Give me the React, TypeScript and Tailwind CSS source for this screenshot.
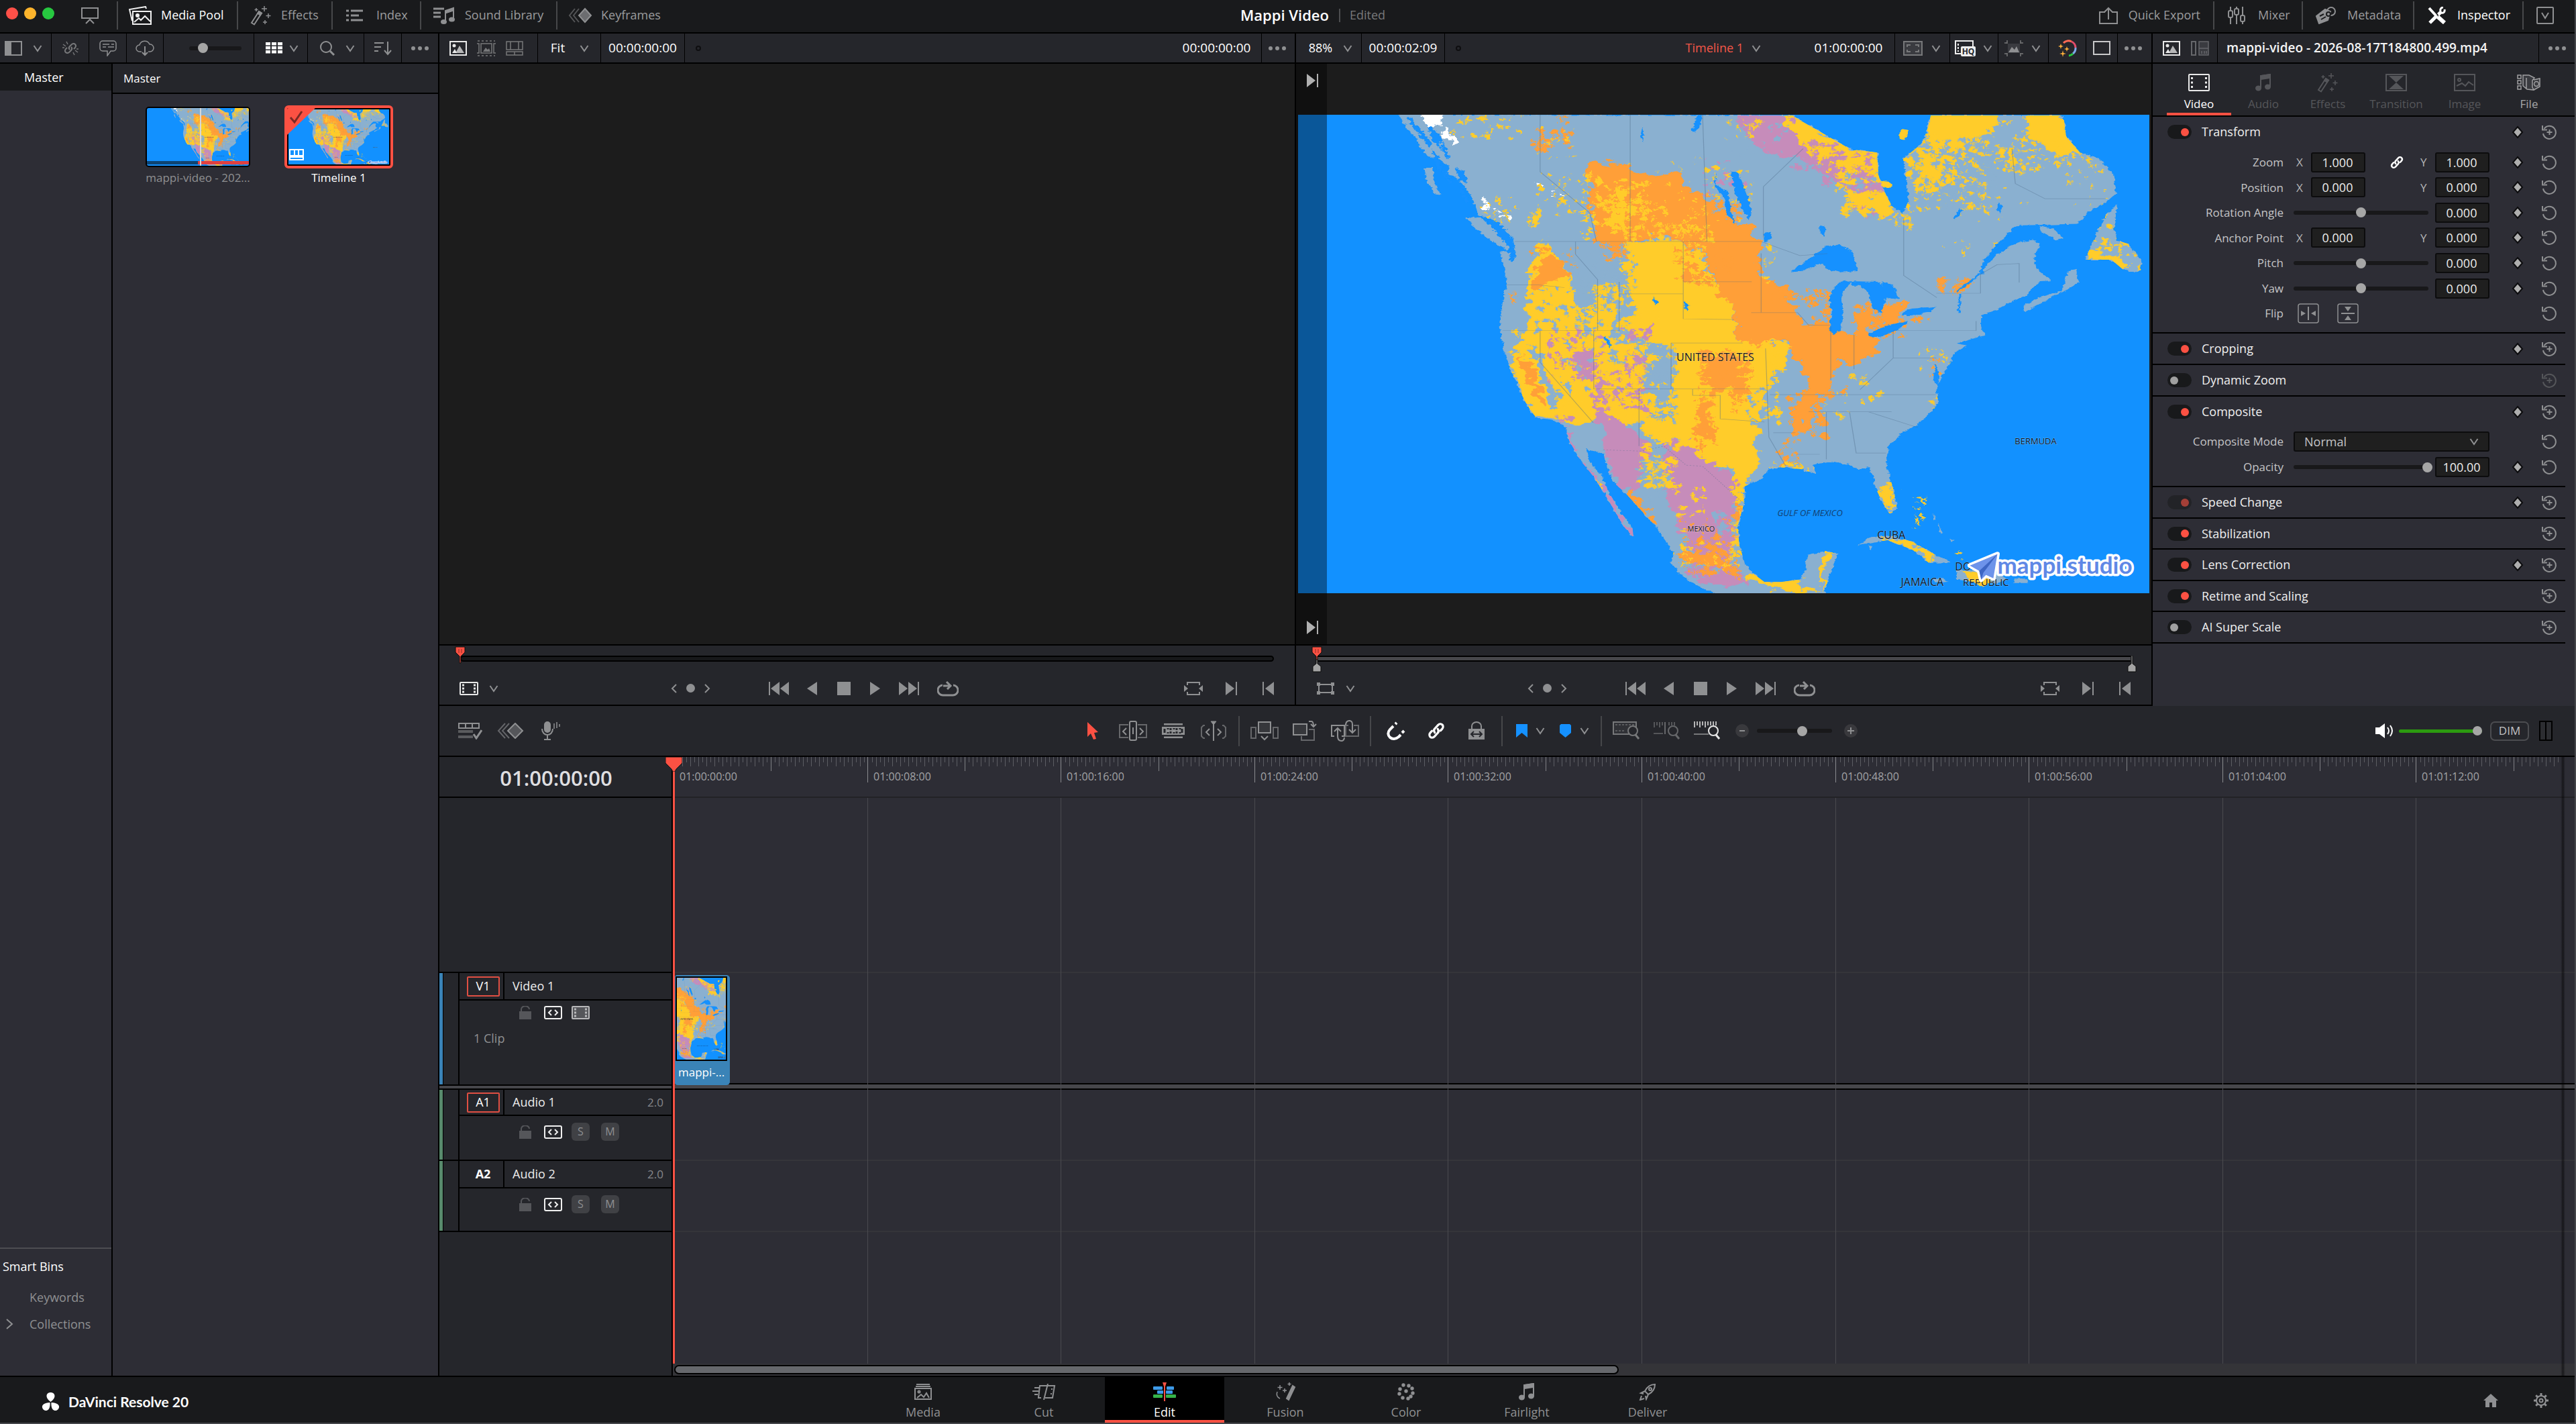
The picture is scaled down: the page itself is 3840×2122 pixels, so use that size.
import React from "react";

type Kids = { children?: React.ReactNode };

/* ---------- icon helper: every icon is drawn on its own pixel grid ---------- */
function Ico({ w, h, c = "#8f9092", s = 2, children, cls = "" }: Kids & { w: number; h: number; c?: string; s?: number; cls?: string }) {
  return (
    <svg width={w} height={h} viewBox={`0 0 ${w} ${h}`} fill="none" stroke={c} strokeWidth={s} color={c} className={`shrink-0 ${cls}`} aria-hidden="true">
      {children}
    </svg>
  );
}

const Chev = ({ c = "#8f9092" }: { c?: string }) => (
  <Ico w={14} h={12} c={c}><path d="M1.5 2l5.5 8 5.5-8" /></Ico>
);
const Dots = () => (
  <Ico w={28} h={8}><g fill="#8f9092" stroke="none"><circle cx="4" cy="4" r="3" /><circle cx="14" cy="4" r="3" /><circle cx="24" cy="4" r="3" /></g></Ico>
);
const Picture = ({ c = "#e8e8e8" }: { c?: string }) => (
  <Ico w={26} h={22} c={c}><rect x="1" y="1" width="24" height="20" /><circle cx="7" cy="7" r="2.5" fill={c} stroke="none" /><path d="M9 18l6-11 7 11z" fill={c} stroke="none" opacity=".75" /><path d="M4 18l4-6 3 6z" fill={c} stroke="none" /></Ico>
);
const Film = ({ c = "#e8e8e8", w = 28, h = 20, fill = "none" }: { c?: string; w?: number; h?: number; fill?: string }) => (
  <Ico w={w} h={h} c={c}>
    <rect x="1" y="1" width={w - 2} height={h - 2} rx="1" fill={fill} />
    {[0.25, 0.5, 0.75].map((f) => (
      <g key={f} fill={c} stroke="none"><rect x="4" y={h * f - 1.5} width="3" height="3" /><rect x={w - 7} y={h * f - 1.5} width="3" height="3" /></g>
    ))}
  </Ico>
);
const Wand = ({ c = "#8f9092" }: { c?: string }) => (
  <Ico w={32} h={30} c={c} s={2}>
    <path d="M2 26L13 9l4 2.500L6 28.500z" /><path d="M13 9l4 2.500-2 3-4-2.500z" fill={c} />
    <path d="M21 1v8M17 5h8M9 4v5M6.500 6.500h5M27 12v7M23.500 15.500h7M22 22v6M19 25h6" strokeWidth="1.500" />
  </Ico>
);
const Note = ({ c = "#8f9092" }: { c?: string }) => (
  <Ico w={24} h={26} c={c} s={2}>
    <path d="M8 21V3l14-2v18" /><path d="M8 8V3l14-2v5z" fill={c} />
    <ellipse cx="4.500" cy="21.500" rx="3.500" ry="3" fill={c} /><ellipse cx="18.500" cy="19.500" rx="3.500" ry="3" fill={c} />
  </Ico>
);
const Diamond = () => (
  <Ico w={20} h={20} c="#0c0c0e" s={2}><path d="M10 2l7 8-7 8-7-8z" fill="#aeaeae" /></Ico>
);
const Reset = ({ plus, dim }: { plus?: boolean; dim?: boolean }) => (
  <button aria-label="Reset" className="flex shrink-0">
    <Ico w={24} h={24} c={dim ? "#55565a" : "#8f9092"} s={2}>
      <path d="M4.500 7A9.500 9.500 0 1 1 3 14" /><path d="M2 2v6.500h7" />
      {plus && <path d="M12.500 8v8M8.500 12h8" />}
    </Ico>
  </button>
);
const LinkGlyph = ({ c = "#fff", size = 22 }: { c?: string; size?: number }) => (
  <svg width={size} height={size} viewBox="0 0 24 24" fill="none" stroke={c} strokeWidth="3" strokeLinecap="round" aria-hidden="true" className="shrink-0">
    <path d="M10 14.500c-2-2.500-1-4.500 0-5.500l4.500-5c2-2 4.500-1.500 5.800-.3 1.400 1.400 1.500 3.800-.3 5.800l-2 2.200" />
    <path d="M14 9.500c2 2.500 1 4.500 0 5.500l-4.500 5c-2 2-4.500 1.500-5.800.3-1.400-1.400-1.500-3.800.3-5.800l2-2.200" />
  </svg>
);

/* ---------- land-cover map ---------- */
const WATER = "#1291ff", LAND = "#8ab0d0", YEL = "#ffcc2c", ORA = "#ff9f38", PUR = "#c68cba";

type Spot = [number, number, number, number, number, string, number];
const SPOTS: Spot[] = [
  [430, 440, 520, 560, 30, ORA, 7], [432, 560, 580, 700, 60, LAND, 7], [500, 420, 600, 700, 90, LAND, 8], [520, 200, 545, 420, 24, YEL, 8],
  [540, 430, 620, 620, 70, LAND, 9], [590, 560, 660, 760, 50, YEL, 9], [640, 740, 690, 1000, 60, LAND, 11], [600, 740, 690, 1000, 70, YEL, 9],
  [460, 700, 560, 860, 60, PUR, 9], [540, 840, 640, 960, 50, PUR, 10], [600, 770, 640, 850, 22, PUR, 10], [560, 700, 640, 900, 50, YEL, 9],
  [450, 760, 620, 1000, 60, YEL, 9], [480, 700, 640, 900, 40, LAND, 8], [690, 420, 800, 560, 60, ORA, 9], [600, 370, 760, 440, 80, YEL, 8],
  [550, 230, 640, 400, 70, YEL, 10], [565, 260, 610, 400, 24, ORA, 8], [620, 260, 760, 420, 50, YEL, 6], [700, 500, 740, 550, 8, ORA, 12], [730, 760, 830, 900, 90, ORA, 11],
  [725, 900, 765, 1080, 50, ORA, 9], [790, 880, 820, 960, 20, ORA, 9], [800, 740, 880, 1000, 80, YEL, 10], [840, 740, 890, 830, 40, YEL, 12],
  [820, 880, 870, 1000, 30, LAND, 9], [630, 1000, 700, 1200, 60, YEL, 10], [640, 1030, 680, 1080, 10, LAND, 9], [690, 1200, 745, 1290, 16, YEL, 9],
  [700, 1290, 800, 1450, 60, ORA, 8], [700, 1330, 800, 1460, 30, YEL, 7], [710, 1440, 820, 1500, 34, PUR, 9], [700, 1400, 800, 1470, 40, ORA, 8],
  [790, 1180, 815, 1420, 50, YEL, 8], [760, 1260, 800, 1340, 14, LAND, 10], [620, 1150, 680, 1240, 30, LAND, 10], [620, 1100, 680, 1210, 26, YEL, 7],
  [280, 23, 420, 100, 30, YEL, 7], [430, 70, 500, 140, 34, ORA, 9], [430, 60, 510, 160, 16, YEL, 6], [430, 210, 520, 340, 34, YEL, 6],
  [340, 280, 400, 360, 20, YEL, 7], [420, 330, 445, 380, 8, YEL, 8], [600, 150, 750, 260, 12, YEL, 5], [470, 23, 495, 60, 8, ORA, 6],
  [720, 190, 830, 360, 44, YEL, 7], [740, 160, 820, 280, 22, PUR, 7], [750, 290, 810, 380, 40, ORA, 9], [780, 30, 850, 110, 26, YEL, 7],
  [790, 40, 900, 160, 40, LAND, 6], [900, 100, 980, 200, 30, PUR, 9], [930, 60, 1060, 200, 60, YEL, 8], [960, 140, 1050, 260, 60, PUR, 9],
  [980, 180, 1070, 340, 60, YEL, 9], [1000, 200, 1060, 330, 24, LAND, 7], [1010, 300, 1110, 360, 20, YEL, 7], [1010, 310, 1070, 350, 10, PUR, 6],
  [1120, 80, 1260, 330, 190, YEL, 8], [1120, 100, 1270, 320, 190, LAND, 8], [1260, 30, 1330, 200, 44, YEL, 7], [1330, 100, 1460, 190, 50, YEL, 7],
  [1290, 150, 1360, 210, 14, YEL, 7], [1400, 90, 1490, 330, 34, YEL, 5], [1200, 200, 1330, 460, 14, YEL, 5], [1440, 370, 1535, 510, 34, YEL, 8],
  [1450, 320, 1480, 430, 12, YEL, 8], [1080, 310, 1115, 370, 16, YEL, 6], [850, 430, 870, 560, 10, YEL, 6], [850, 570, 940, 620, 20, ORA, 8],
  [930, 570, 972, 700, 36, ORA, 9], [1010, 620, 1110, 720, 70, ORA, 10], [1110, 660, 1150, 680, 8, ORA, 6], [1165, 540, 1220, 590, 26, ORA, 8],
  [1130, 760, 1190, 850, 14, YEL, 5], [1150, 790, 1170, 850, 8, ORA, 6], [1000, 840, 1040, 880, 14, YEL, 8], [960, 880, 1000, 910, 14, ORA, 7],
  [1030, 900, 1060, 930, 5, YEL, 7], [960, 900, 1010, 990, 8, YEL, 6], [895, 900, 960, 1040, 60, ORA, 9], [880, 1040, 915, 1130, 24, ORA, 7],
  [860, 1120, 945, 1150, 26, YEL, 8], [1055, 1185, 1090, 1270, 34, YEL, 9], [1050, 1350, 1165, 1430, 30, YEL, 8], [1135, 420, 1240, 450, 4, YEL, 6],
  [390, 690, 440, 780, 12, YEL, 7], [390, 580, 402, 620, 8, ORA, 7], [465, 970, 500, 1010, 12, PUR, 8], [535, 1180, 560, 1230, 14, YEL, 7],
  [680, 1380, 720, 1450, 14, YEL, 5], [1150, 880, 1165, 960, 6, YEL, 6], [1120, 1225, 1145, 1330, 9, YEL, 5], [1195, 1400, 1210, 1430, 2, YEL, 6],
];

function blobs([x0, y0, x1, y1, n, , size]: Spot, seed: number) {
  let s = seed * 7919 + 17;
  const r = () => ((s = (s * 16807) % 2147483647) / 2147483647);
  let d = "";
  for (let i = 0; i < n; i++) {
    const x = x0 + r() * (x1 - x0), y = y0 + r() * (y1 - y0);
    const big = r() > 0.75 ? 2 : 1.1;
    const a = big * size * (0.3 + r() * 0.6), b = big * size * 1.5 * (0.4 + r() * 0.9);
    d += `M${(x - a / 2).toFixed(1)} ${y.toFixed(1)}l${(a * r()).toFixed(1)} ${(-b / 2).toFixed(1)}l${(a * 0.7).toFixed(1)} ${(b * r()).toFixed(1)}l${(-a * r()).toFixed(1)} ${(b / 2).toFixed(1)}z`;
  }
  return d;
}
const SPOT_PATHS = SPOTS.map((s, i) => ({ d: blobs(s, i + 3), c: s[5] }));

const COAST =
  "M190 23l14 40 18 34 18 56 22 8 20 24-5 30 18 4 8 22 12 20 12 40 8 40 18 10 22 44 22 52 4 8-28-2 8 50 4 60-8 60-4 70 8 80 16 70 12 50 14 48 16 38 30 6 22 22 8 46 20 60 26 56 18 50 18 54 18 52 16 32-2-30-24-58-18-54-16-60-20-40-6-38 32 16 6 40 10 46 26 42 24 46 26 50 24 60 10 26-5 34 20 40 30 32 40 33h192l-2-25 12-60 12-50-24-8-32 12-4 46-10 32-34 8h-30l-20-26-16-34-10-62-2-60 12-70v-50l30-24 14-30 20-6 40 6 26 16-6-30 34-10 30 8 16 16 20-6 10 26 2 34 12 46 15 43 13-18-5-50-8-50-7-50 5-50 22-36 25-24 27-40 16-30-4-50 10-42 16-38 5-30 24-26-18-6 52-26-8-22v-40l30-20 28-26 26-18 10-26 14-18 20-2-22-28-10-28 4-32 6-28-12-12-30 8-26 28-20 28-20 40 6-40 30-60 30-50 50-2 60-3 20-35 30-30 20-30-5-60-25-50-35-20-25-50-5-67h-240l-5 37-10 50-35 50 5 60 5 70-10 45-20-25-15-50-10-50-2-70-48-10-50-50-45-45-10-12z";

/* x centre, baseline, size, half width, text */
const PLACES: [number, number, number, number, string][] = [
  [622, 367, 16, 60, "UNITED STATES"], [601, 620, 11, 22, "MEXICO"], [884, 631, 16, 22, "CUBA"], [930, 701, 16, 34, "JAMAICA"],
  [991, 678, 16, 14, "DO"], [1025, 701, 15, 36, "REPUBLIC"], [1099, 490, 13, 32, "BERMUDA"],
];

function LandMap({ x = 0, w = 1269, cls, title }: { x?: number; w?: number; cls: string; title: string }) {
  const id = React.useId().replace(/[^a-zA-Z0-9]/g, "");
  const fits = (c: number, half: number) => c - half > x && c + half < x + w;
  return (
    <svg viewBox={`${x} 0 ${w} 713`} preserveAspectRatio="xMidYMid slice" className={cls} role="img" aria-label={title}>
      <defs>
        <filter id={`r${id}`} x="-2%" y="-2%" width="104%" height="104%">
          <feTurbulence type="fractalNoise" baseFrequency="0.04" numOctaves="5" seed="4" />
          <feDisplacementMap in="SourceGraphic" scale="46" xChannelSelector="R" yChannelSelector="G" />
        </filter>
        <filter id={`s${id}`} x="-2%" y="-2%" width="104%" height="104%">
          <feTurbulence type="fractalNoise" baseFrequency="0.12" numOctaves="3" seed="21" />
          <feDisplacementMap in="SourceGraphic" scale="15" xChannelSelector="R" yChannelSelector="G" />
        </filter>
        <filter id={`c${id}`} x="-2%" y="-2%" width="104%" height="104%">
          <feTurbulence type="fractalNoise" baseFrequency="0.09" numOctaves="3" seed="9" />
          <feDisplacementMap in="SourceGraphic" scale="10" xChannelSelector="R" yChannelSelector="G" />
        </filter>
        <clipPath id={`l${id}`}>
          <path d={COAST} />
          <path d="M1490 305l-20 35-15 50-10 40-13 50h48l20 30 30 10 5-40-25-50-20-10-5-40z" />
          <path d="M1020 1383l25-28 35-5 40 20 40 40 30 25-40 2-30-42-45-30-40 10z" />
          <path d="M1100 1200h60v140h-60zM1190 1395h30v50h-30z" />
        </clipPath>
      </defs>
      <rect x="-400" width="2000" height="713" fill={WATER} />
      <g transform="scale(.8227 .4719) translate(-7 -23)">
        <g filter={`url(#c${id})`} fill={LAND}>
          <path d={COAST} />
          <path d="M1490 305l-20 35-15 50-10 40-13 50h48l20 30 30 10 5-40-25-50-20-10-5-40zM1320 625l30-26 40-20 10-60 16-10 4 40-20 26-30 26-26 24-20 20zM1350 375l26 8 16 30-14 4-24-24zM312 345l28 5 35 50 16 44-6 6-36-40-20-30zM235 190h16l4 50 10 36-10-4-14-40zM1020 1383l25-28 35-5 40 20 40 40 30 25-40 2-30-42-45-30-40 10zM1155 1488l20-2 10 8-24 4zM1303 1486h26v14h-24zM1200 1460l60 2 30 26-20 14-40-8-30-4z" />
        </g>
        <g filter={`url(#s${id})`} fill={WATER}>
          <path d="M215 60l10-4 26 60-6 10zM240 40l10 60 20 40-4-50zM250 130l12 30 10 50-14-20zM292 190l8 40 14 10-6-40zM340 340l30 20 28 60 4 50-10 20-2-50-30-60zM206 30l8 0 10 40-6 0zM262 110l8 0 14 50-8 0zM270 200l6 0 12 40-8 0zM300 250l6 0 12 50-8 0z" />
        </g>
        <g clipPath={`url(#l${id})`}>
          <g filter={`url(#r${id})`}>
            <path fill={YEL} d="M556 430l54 0 30-10 60 0 45 60 20 80 30 60 5 120 70-5 20 45-10 50-20 50-10 60-15 60 15 10-15 50 5 80-25 50-5 70-10 0-5-120-30-10-25-20-30-50-10-10-40 10-30-50 10-50 50-40V770l-20-30-45-10-35-30 30-70-20-90z" />
            <path fill={YEL} d="M455 420l10 40 25 20 10 40 5 40h35l45 0 5 80-10 60-20 40 40 0 30 20 0 130 55 50-50 50-40 0-40-10-40 20-20-10-20-15-40 0-25-75-15-60 5-80 25-70-5-90 7-80 13-70z" />
            <path fill={LAND} d="M645 750l40 10 4 130-30 30-20-60zM425 745l20 10 20 100 22 90-12 10-20-70-16-60zM500 560l34-10 14 60-30 30z" />
            <path fill={ORA} d="M530 180l15-10 55 10 5 30 35 5 60-5 20 25-10 25 40 10 5 40 25 30 20 30 30 0 0 40 15 15-5 75 10 30 40 40 15 50 15 60 40 0 10-80-2 90 32 25 45 0 15 25-10 50-40 20-25-10-10 60-20 40-20 60-10 70-20 0 0-70 25-80 0-30-15-50-20-40-25-25-30 25-25-20-15 0 0-40-5-80-30-30 0-50-20-70-45-50-50-20-50 30 5 50-30 5-25-65-15-80 5-80z" />
            <path fill={YEL} d="M578 260l14-12 12 10-2 40 8 30-10 20 4 34-14 16-16-4-6-34 8-24-8-30z" />
            <path fill={ORA} d="M458 470l32 12 10 56-36 8-20 24-8-30zM412 780l12 30 20 70 20 60-10 6-26-60-16-60zM1020 710l2-60 22-24 8 70zM1060 680l10-50 40-26-20 46 14 12-30 26zM1195 585l10-30 16-20-6 40zM740 780l60-10 20 60-10 60-60-10zM732 940l14 0 10 80-10 30-14-30z" />
            <path fill={PUR} d="M600 695l44-8 4 40-40 10zM500 790l26-30 12-10 8 100 26 20-6 50-16-16-10-60-20 10zM545 930l20 30 40 40 30 50 10 60-20 20 5 70-20 20-30-40-10-50-10-50 0-60-20-40zM670 1060l40-10 30 60 25 20 35 40-5 80 5 40-5 90-15 50-60-30-20-70-15-40-10-70-3-100zM490 1000l15 60 40 105 27 50 18 55 26 84-22-20-22-60-24-80-34-70-22-66zM720 1450l50 10 45 20 2 30-50 0-36-20z" />
            <path fill={ORA} d="M604 1200l16 30 24 40 14 40-8 4-20-40-26-56zM798 1240l14 6-4 60-10-10zM700 1408l60 4 50 50-4 24-40-40-60-14z" />
            <path fill={YEL} d="M824 1460l26 30 66-6-2 30 40 16 0-90 12-60 8 4-10 90-10 60-40-2-60-16-36-30zM1060 1190l22 0 8 70-10 20-14-40z" />
            <path fill={PUR} d="M800 23h90l30 47 60 60 30 50 40 40 15 50-25 30-40-50-40-50-50-40-40-10-40-40-20-50z" />
            <path fill={YEL} d="M895 20l25 3 40 57 50 50 50 6 6 90 24 80-20 36-40 0-20-30-16-80-34-70-40-50-25-60z" />
            <path fill={PUR} d="M1000 180l40 10 22 70-20 20-26-30z" />
            <path fill={YEL} d="M1150 0h130l-10 70-44 30-34 60 14 50-24 40-26 20-30-10-16-120 36-60zM1330 0h66l6 90 24 50-40 16-36-50-20-26zM1290 130l10 4 0 50-8-10z" />
            <path fill={YEL} d="M1070 1352l50 20 44 44-10 20-40-44-50-30zM1436 450l54 14 24 40-24 6-24-30-34 4z" />
            <path fill="#fff" d="M235 10l34 0-4 50-16 4zM272 62l16 8 4 30-10 6-10-20zM345 286l8 16 0 20-8-4zM360 312l10 10-6 8zM372 338l14 4 4 24-8 0zM478 272l12 2-2 10zM440 240l12 8-6 8z" />
          </g>
          <g filter={`url(#s${id})`}>
            {SPOT_PATHS.map((p, i) => <path key={i} d={p.d} fill={p.c} />)}
          </g>
        </g>
        <g filter={`url(#c${id})`}>
          <path fill={YEL} d="M1062 232l14 2 8 14-12 6-8-8zM1095 80l8-12 12 4-8 30-10 0zM1210 1462l30 4 24 30-18 16-26-24zM1120 1230l16-2 8 24-4 2-6-20zM1125 1280l6 30 4 10-6-4zM1198 1406l12-2-6 8zM1530 490l4 20-6 8z" />
          <path fill={LAND} d="M1156 1280l6 20-4 2zM1166 1310l8 30-4 2zM1188 1358l10 8-6 4zM1040 1384l10 2-6 8z" />
          <path fill={WATER} d="M900 518l30-38 15-20 20-26 10 6 12-10 24 26 10 60-30 4-22-6-14-24-26 22zM986 550l22-4-16 46 2 50-4 60-14 16-6-20 4-50-6-40 8-36zM1006 548l54 2 16 30 20 26-24-6-8 48-14-10-6-30-8-32-12-14-12 0zM1062 548l22 12 14 46-14-6-14-30zM1040 716l28-26 44-16-12 22-36 26-18 4zM1100 656l10-20 52-8-10 18-36 10zM790 200l15 5 10 45 13 70-3 36-12-34-14-50zM766 204l-6 36 26 26 6 66 8 36-16-30-4-50-18-40zM955 370l8 16-4 20-8-16zM850 400l12-10 4 24-14 12zM720 70l12-46 6 0-4 40-10 16zM630 60l4 24-2 26-4-20zM565 720l10 30-4 6-8-24zM1160 806l8 30-2 44-8-30zM1275 300l8 10-4 24-8-14zM1205 320l6 4-14 30-4-4zM650 594l8 20-4 10zM706 610l8 14-4 20z" />
          <path stroke={WATER} strokeWidth="4" fill="none" d="M1306 380l-40 76-20 64-46 62M1206 588l-2 60" />
        </g>
        <g stroke="#4d6c8a" strokeOpacity=".4" strokeWidth="1.500" fill="none">
          <path d="M400 423h446M446 23v180l90 130 12 90M609 23v400M740 23l8 400M850 250l72-120M850 250v160M510 423v40l40 80v160M378 704h211V550M589 588h116M705 423v244M705 550h124M705 667l92 2M384 560h60l46 8M446 704v100l96 190M543 704v184h310M625 888v180M683 743h130M683 743v145M722 888v20h50v74l80 10M828 647h84l20 40h40M846 460v187M854 760l6 280 30 90M862 906h300M868 1026h40M910 1094h42M932 960h150M964 960v150M1006 960l12 130h54M1040 960l90 50M1085 704h150v-30M1085 790h78M1085 704v86l-60 100M972 690v170M1014 716v110M1104 350v180l60 70M1163 586h80v-60l30-30 40-4v60M1360 288h110M1300 130l6 110 54 48M846 423l70 44 50-6" />
          <path d="M560 1080l70 4 40-16 40 60 30 4 70 110" strokeDasharray="3 3" />
        </g>
      </g>
      <g textAnchor="middle" fill="#15181e" fontFamily='"Open Sans", "Noto Sans", sans-serif' fontWeight="500">
        {PLACES.filter((p) => fits(p[0], p[3] + 4)).map(([px, y, s, , t]) => (
          <text key={t} x={px} y={y} fontSize={s} stroke="#fff" strokeOpacity=".3" strokeWidth="1" paintOrder="stroke">{t}</text>
        ))}
        {fits(763, 60) && <text x="763" y="597" fontSize="13" fontStyle="italic" fill="#14406e">GULF OF MEXICO</text>}
      </g>
      {fits(1130, 136) && (
        <g>
          <g stroke="#fff" strokeLinejoin="round" paintOrder="stroke">
            <path d="M1042 654l-41 17 14 8 3 13 7-7 11 5z" fill="#6d93ea" strokeWidth="7" />
            <text x="1042" y="683" fontSize="35" fontWeight="700" fill="#5f88e6" strokeWidth="7" fontFamily='Lato, "Open Sans", sans-serif'>mappi.studio</text>
          </g>
          <path d="M1042 654l-27 25 3 13 3-10z" fill="#3d66c4" />
        </g>
      )}
    </svg>
  );
}

/* ---------- title bar ---------- */
function TopItem({ icon, label, active, cls }: { icon: React.ReactNode; label: string; active?: boolean; cls: string }) {
  return (
    <button className={`flex h-full items-center whitespace-nowrap text-[18px] ${active ? "font-medium text-white" : "text-[#9a9b9d]"} ${cls}`}>
      {icon}<span>{label}</span>
    </button>
  );
}
const Bar = () => <span className="h-[42px] w-[2px] self-start mt-[2px] shrink-0 bg-[#47484a]" />;

function TitleBar() {
  return (
    <header className="flex h-[50px] shrink-0 border-b-2 border-black bg-[#191a1c]">
      <div className="flex flex-1 items-center pb-[3px]">
        <div className="flex w-[174px] items-center self-stretch pl-[9px]">
          <button aria-label="Close" className="mb-[6px] size-[18px] rounded-full bg-[#fe5048]" />
          <button aria-label="Minimize" className="mb-[6px] ml-[9px] size-[18px] rounded-full bg-[#fdb42c]" />
          <button aria-label="Zoom" className="mb-[6px] ml-[9px] size-[18px] rounded-full bg-[#27c840]" />
          <button aria-label="Full screen" className="ml-[40px] flex">
            <Ico w={26} h={26}><rect x="1" y="2" width="24" height="15" /><path d="M7 25l6-6 6 6" /></Ico>
          </button>
        </div>
        <Bar />
        <TopItem cls="w-[177px] gap-[14px] pl-[16px]" active label="Media Pool" icon={
          <Ico w={34} h={28} c="#f0f0f0"><path d="M5 22L1 5l24-4 1 3" /><rect x="6" y="8" width="27" height="19" /><circle cx="13" cy="14" r="2" fill="#f0f0f0" /><path d="M8 24l7-6 3 3 6-6 8 8" /></Ico>} />
        <Bar />
        <TopItem cls="w-[139px] gap-[14px] pl-[18px]" label="Effects" icon={<Wand />} />
        <Bar />
        <TopItem cls="w-[130px] gap-[20px] pl-[19px]" label="Index" icon={
          <Ico w={26} h={20} s={3}><path d="M8 3h18M8 10h12M8 17h18" /><path d="M1 3h4M1 10h4M1 17h4" /></Ico>} />
        <Bar />
        <TopItem cls="w-[201px] gap-[14px] pl-[17px]" label="Sound Library" icon={
          <Ico w={34} h={26} s={3}><path d="M1 3h16M1 9h11M1 15h11" /><path d="M19 22V6l12-4v16" strokeWidth="2" /><path d="M19 10V6l12-4v4z" fill="#8f9092" strokeWidth="1" /><ellipse cx="16.500" cy="22.500" rx="3" ry="2" fill="#8f9092" /><ellipse cx="28.500" cy="19" rx="3" ry="2" fill="#8f9092" /></Ico>} />
        <Bar />
        <TopItem cls="gap-[13px] pl-[16px]" label="Keyframes" icon={
          <Ico w={36} h={24}><path d="M10 2L2 12l8 10M16 2L8 12l8 10" opacity=".5" /><path d="M25 2l9 10-9 10-9-10z" fill="#6c6d70" /></Ico>} />
      </div>
      <h1 className="flex items-center pr-[8px] pb-[3px] text-[22px] font-semibold text-white">Mappi Video</h1>
      <div className="flex flex-1 items-center pb-[3px]">
        <span className="ml-[7px] h-[20px] w-[2px] bg-[#4c4d4f]" />
        <span className="ml-[14px] text-[18px] text-[#77787a]">Edited</span>
        <span className="flex-1" />
        <TopItem cls="gap-[16px] pr-[19px]" label="Quick Export" icon={
          <Ico w={28} h={26}><path d="M9 8H1v17h26V8h-8" /><path d="M14 19V2M8 8l6-6 6 6" /></Ico>} />
        <Bar />
        <TopItem cls="w-[130px] gap-[19px] pl-[20px]" label="Mixer" icon={
          <Ico w={26} h={26}><path d="M4 0v6M4 17v9M13 0v3M13 12v14M22 0v13M22 23v3" /><rect x="1" y="6" width="6" height="10" rx="2" /><rect x="10" y="3" width="6" height="9" rx="2" /><rect x="19" y="13" width="6" height="9" rx="2" /></Ico>} />
        <Bar />
        <TopItem cls="w-[164px] gap-[17px] pl-[19px]" label="Metadata" icon={
          <Ico w={30} h={26}><path d="M1 14l13-10 8 3-4 13-13 5z" fill="#8f9092" /><path d="M6 14l6-3M8 19l7-4" stroke="#191a1c" /><circle cx="23" cy="7" r="6" /><circle cx="19" cy="11" r="3" stroke="#191a1c" /></Ico>} />
        <Bar />
        <TopItem cls="w-[161px] gap-[16px] pl-[20px]" active label="Inspector" icon={
          <Ico w={28} h={26} c="#fff" s={3}><path d="M2 2l10 11" strokeWidth="4" /><path d="M15 15l10 9" strokeWidth="6" /><path d="M3 24l11-11" strokeWidth="5" /><path d="M15 11l4-4c-1-3 1-6 4-6M25 4c1 4-2 6-5 5l-4 4" /></Ico>} />
        <Bar />
        <button aria-label="Collapse" className="mr-[31px] ml-[19px] flex">
          <Ico w={26} h={26}><rect x="1" y="1" width="24" height="24" rx="1" /><path d="M8 9l5 8 5-8" /></Ico>
        </button>
      </div>
    </header>
  );
}

/* ---------- panel sub-bars ---------- */
const SubBar = ({ children }: Kids) => (
  <div className="flex h-[45px] shrink-0 items-stretch border-b-2 border-black bg-[#25262b]">{children}</div>
);
function Cell({ w, children, last, label }: Kids & { w: string; last?: boolean; label: string }) {
  return <button aria-label={label} className={`flex shrink-0 items-center justify-center ${last ? "" : "border-r border-black"} ${w}`}>{children}</button>;
}
const Tc = ({ children, cls = "" }: Kids & { cls?: string }) => (
  <span className={`flex items-center justify-center text-[19px] font-medium text-white ${cls}`}>{children}</span>
);

/* ---------- media pool ---------- */
function MediaPool() {
  return (
    <section aria-label="Media Pool" className="flex w-[655px] shrink-0 flex-col border-r-2 border-black">
      <SubBar>
        <Cell w="w-[77px] gap-[16px] pr-[7px]" label="Bin list"><Ico w={26} h={22}><rect x="1" y="1" width="24" height="20" /><rect x="1" y="1" width="8" height="20" fill="#8f9092" /></Ico><Chev /></Cell>
        <Cell w="w-[56px]" label="Relink">
          <Ico w={26} h={22} c="#77787a"><path d="M12 13c-2-2-1-4 0-5l3-3c2-1.500 4-1 5 0s1.500 3 0 5l-2 2M14 9c2 2 1 4 0 5l-3 3c-2 1.500-4 1-5 0s-1.500-3 0-5l2-2" /><path d="M2 5l4 3M7 1l2 4M1 10h3M24 17l-4-3M19 21l-2-4M25 12h-3" strokeWidth="1.500" /></Ico>
        </Cell>
        <Cell w="w-[56px]" label="Comments"><Ico w={26} h={24}><path d="M5 1h16a4 4 0 0 1 4 4v7a4 4 0 0 1-4 4h-4l-5 7v-7H5a4 4 0 0 1-4-4V5a4 4 0 0 1 4-4z" strokeWidth="1.500" /><path d="M5 6h10M18 6h4M5 10h5M13 10h9" strokeWidth="1.500" /></Ico></Cell>
        <Cell w="w-[55px]" label="Cloud"><Ico w={28} h={24}><path d="M9 17H6a5 5 0 0 1 0-10 8 8 0 0 1 15-1 5.500 5.500 0 0 1 1 11h-3" strokeWidth="1.500" /><path d="M14 9v13M10 18l4 4 4-4" /></Ico></Cell>
        <div className="flex w-[135px] items-center border-r border-black pl-[38px]"><Range label="Thumbnail size" value={20} w="w-[78px]" /></div>
        <Cell w="w-[80px] gap-[10px] pl-[4px]" label="View"><Ico w={25} h={17}><g fill="#fff" stroke="none">{[0, 6, 12].map((y) => [0, 9, 18].map((x) => <rect key={`${x}-${y}`} x={x} y={y} width="7" height="4.500" />))}</g></Ico><Chev /></Cell>
        <Cell w="w-[84px] gap-[15px] pl-[4px]" label="Search"><Ico w={24} h={24} s={2}><circle cx="10" cy="10" r="8" /><path d="M16 16l6 6" strokeWidth="3" /></Ico><Chev /></Cell>
        <Cell w="w-[56px]" label="Sort"><Ico w={28} h={22}><path d="M1 3h14M1 9h10M1 15h6" /><path d="M21 1v19M16 14l5 6 5-6" /></Ico></Cell>
        <Cell w="w-[54px]" last label="More"><Dots /></Cell>
      </SubBar>
      <div className="flex min-h-0 flex-1">
        <nav aria-label="Bins" className="flex w-[168px] shrink-0 flex-col border-r-2 border-black bg-[#2d2d35]">
          <button className="h-[40px] bg-[#191a1c] pl-[36px] text-left text-[18px] font-medium text-white">Master</button>
          <span className="flex-1" />
          <div className="flex h-[191px] flex-col border-t-2 border-[#4d4d52] pt-[12px] text-[18px] text-[#8f9092]">
            <h2 className="pl-[4px] leading-[28px] font-medium text-white">Smart Bins</h2>
            <button className="mt-[18px] pl-[44px] text-left leading-[28px]">Keywords</button>
            <button className="mt-[12px] flex items-center pl-[8px] text-left leading-[28px]"><Ico w={12} h={16}><path d="M2 1l8 7-8 7" /></Ico><span className="ml-[24px]">Collections</span></button>
          </div>
        </nav>
        <div className="flex flex-1 flex-col bg-[#2d2d35]">
          <div className="flex h-[45px] items-center border-b-2 border-black bg-[#25262b] pl-[16px] text-[17px] font-medium text-white">Master</div>
          <div className="flex pt-[17px]">
            <figure className="ml-[47px] flex w-[160px] flex-col items-center">
              <div className="relative mt-[2px] h-[90px] w-[156px] overflow-hidden rounded-[5px] border-2 border-black">
                <LandMap x={-150} cls="size-full" title="mappi-video frame" />
                <span className="absolute bottom-[2px] left-0 h-[5px] w-full bg-linear-to-r from-[#0e4472] from-50% to-[#e04040] to-50%" />
                <span className="absolute inset-y-0 left-[79px] w-[2px] bg-[#d8d8d8]" />
              </div>
              <figcaption className="mt-[3px] text-[17px] leading-[26px] text-[#8f9092]">mappi-video - 202...</figcaption>
            </figure>
            <figure className="ml-[49px] flex w-[162px] flex-col items-center">
              <div className="relative h-[94px] w-[162px] overflow-hidden rounded-[6px] border-4 border-[#fc5143]">
                <LandMap cls="size-full border-2 border-black" title="Timeline 1 frame" />
                <svg className="absolute top-0 left-0" width="46" height="46" viewBox="0 0 46 46" aria-hidden="true"><path d="M0 0h42L0 40z" fill="#fc5143" /><path d="M5 14l6 7L22 5" fill="none" stroke="#7b2a25" strokeWidth="3" /></svg>
                <svg className="absolute bottom-[8px] left-[3px]" width="22" height="17" viewBox="0 0 22 17" fill="none" stroke="#fff" strokeWidth="2" aria-hidden="true"><path d="M1 1h20v9H1zM8 1v9M14 1v9M1 12h20v4H1z" /></svg>
              </div>
              <figcaption className="mt-px text-[17px] leading-[26px] font-medium text-white">Timeline 1</figcaption>
            </figure>
          </div>
        </div>
      </div>
    </section>
  );
}

/* ---------- form controls ---------- */
function Range({ label, value, w }: { label: string; value: number; w: string }) {
  return (
    <input type="range" aria-label={label} defaultValue={value} min={0} max={100}
      className={`h-[6px] shrink-0 appearance-none rounded-full bg-[#18181a] [&::-webkit-slider-thumb]:size-[15px] [&::-webkit-slider-thumb]:appearance-none [&::-webkit-slider-thumb]:rounded-full [&::-webkit-slider-thumb]:bg-[#a6a6a6] ${w}`} />
  );
}
const Field = ({ label, v }: { label: string; v: string }) => (
  <input type="text" aria-label={label} defaultValue={v} className="h-[30px] w-[81px] shrink-0 rounded-[3px] border-2 border-[#0c0c0d] bg-[#1f1f1f] pr-[2px] text-center text-[18px] text-[#ececec]" />
);
const Row = ({ label, children, diamond }: Kids & { label: string; diamond?: boolean }) => (
  <div className="flex items-center">
    <span className="w-[195px] shrink-0 text-right text-[17px] text-[#c4c4c6]">{label}</span>
    <div className="ml-[15px] flex w-[292px] shrink-0 items-center">{children}</div>
    <span className="ml-[32px] flex w-[20px] shrink-0">{diamond && <Diamond />}</span>
    <span className="ml-[25px] flex"><Reset /></span>
  </div>
);
const XY = ({ label, v, link }: { label: string; v: string; link?: boolean }) => (
  <Row label={label} diamond>
    <span className="w-[26px] pl-[4px] text-[17px] text-[#b4b4b6]">X</span>
    <Field label={`${label} X`} v={v} />
    <span className="flex w-[82px] pl-[37px]">{link && <button aria-label="Link X and Y" className="flex"><LinkGlyph size={20} /></button>}</span>
    <span className="flex-1 text-[17px] text-[#b4b4b6]">Y</span>
    <Field label={`${label} Y`} v={v} />
  </Row>
);
const Slide = ({ label, v, pos, w = "w-[201px]" }: { label: string; v: string; pos: number; w?: string }) => (
  <Row label={label} diamond>
    <Range label={`${label} slider`} value={pos} w={w} />
    <span className="flex-1" />
    <Field label={label} v={v} />
  </Row>
);
function Head({ name, on = true, dim, diamond, resetDim }: { name: string; on?: boolean; dim?: boolean; diamond?: boolean; resetDim?: boolean }) {
  return (
    <div className="flex h-[45px] items-center pl-[22px]">
      <label className="flex items-center gap-[15px] text-[18px] font-medium text-[#efefef]">
        <input type="checkbox" role="switch" defaultChecked={on}
          className={`flex h-[21px] w-[36px] appearance-none items-center rounded-full px-[4px] before:block before:size-[12px] before:rounded-full before:bg-[#a0a0a0] checked:justify-end checked:before:bg-[#fc5143] ${dim ? "bg-[#222327] before:opacity-60" : "bg-[#18191b]"}`} />
        {name}
      </label>
      <span className="flex-1" />
      <span className="flex w-[20px]">{diamond && <Diamond />}</span>
      <span className="mr-[12px] ml-[25px] flex"><Reset plus dim={resetDim} /></span>
    </div>
  );
}

/* ---------- inspector ---------- */
function Inspector() {
  const dim = "#55565a";
  const tabs: [string, string, string, React.ReactNode][] = [
    ["Video", "w-[96px]", "text-white font-medium border-[#fc5143]", <Film w={32} h={26} />],
    ["Audio", "w-[96px]", "text-[#55565a] border-transparent", <Note c={dim} />],
    ["Effects", "w-[96px]", "text-[#55565a] border-transparent", <Wand c={dim} />],
    ["Transition", "w-[108px]", "text-[#55565a] border-transparent", <Ico w={32} h={26} c={dim}><rect x="1" y="1" width="30" height="24" /><path d="M5 3h22L5 23h22z" fill={dim} stroke="none" /></Ico>],
    ["Image", "w-[96px]", "text-[#55565a] border-transparent", <Ico w={32} h={26} c={dim}><rect x="1" y="1" width="30" height="24" /><circle cx="8" cy="9" r="2" /><path d="M4 18l8-4 5 4 5-6 7 5" /></Ico>],
    ["File", "w-[96px]", "text-[#a6a6a8] border-transparent", <Ico w={36} h={26} c="#a0a0a2"><path d="M1 2h5v5H1zM1 10h5v5H1zM1 18h5v5H1z" strokeWidth="1.500" /><path d="M9 2h9l8 4-3 4v10l2 4-10-1-6-5zM14 6v16M25 9l9-2v12l-9 5" strokeWidth="1.500" fill="#3a3b40" /><circle cx="29" cy="15" r="3.500" strokeWidth="1.500" /></Ico>],
  ];
  return (
    <section aria-label="Inspector" className="flex w-[629px] shrink-0 flex-col bg-[#2d2d35]">
      <SubBar>
        <div className="flex w-[97px] items-center gap-[16px] border-r border-black pl-[15px]">
          <button aria-label="Clip" className="flex"><Picture /></button>
          <button aria-label="Multiple" className="flex"><Ico w={27} h={22} c="#66676b"><rect x="1" y="1" width="6" height="20" /><rect x="12" y="1" width="14" height="20" fill="#3a3b40" strokeWidth="1.500" /><path d="M12 11h14M16 15v4M20 15v4M23 15v4" strokeWidth="1.500" /></Ico></button>
        </div>
        <span className="flex flex-1 items-center border-r border-black pl-[13px] text-[19px] font-semibold whitespace-nowrap text-[#f4f4f4]">mappi-video - 2026-08-17T184800.499.mp4</span>
        <Cell w="w-[53px]" last label="Inspector options"><Dots /></Cell>
      </SubBar>
      <div role="tablist" className="flex h-[79px] shrink-0 border-b-2 border-black bg-[#25262b] pl-[21px]">
        {tabs.map(([name, w, c, icon], i) => (
          <button key={name} role="tab" aria-selected={i === 0} className={`flex flex-col items-center border-b-4 text-[17px] ${w} ${c}`}>
            <span className="mt-[13px] flex h-[30px] items-center">{icon}</span>
            <span className="mt-[6px] leading-[22px]">{name}</span>
          </button>
        ))}
      </div>
      <div className="mr-[14px] flex flex-col">
        <div className="border-b-2 border-black">
          <Head name="Transform" diamond />
          <div className="mb-[9px] grid h-[267px] grid-rows-7 pt-[4px]">
            <XY label="Zoom" v="1.000" link />
            <XY label="Position" v="0.000" />
            <Slide label="Rotation Angle" v="0.000" pos={50} />
            <XY label="Anchor Point" v="0.000" />
            <Slide label="Pitch" v="0.000" pos={50} />
            <Slide label="Yaw" v="0.000" pos={50} />
            <Row label="Flip">
              <button aria-label="Flip horizontal" className="ml-[6px] flex"><Ico w={32} h={30}><rect x="1" y="1" width="30" height="28" rx="3" strokeWidth="1.500" /><path d="M16 5v20" /><path d="M5 11l7 4-7 4zM27 11l-7 4 7 4z" fill="#8f9092" stroke="none" /></Ico></button>
              <button aria-label="Flip vertical" className="ml-[27px] flex"><Ico w={32} h={30}><rect x="1" y="1" width="30" height="28" rx="3" strokeWidth="1.500" /><path d="M6 15h20" /><path d="M11 5l5 7 5-7zM11 25l5-7 5 7z" fill="#8f9092" stroke="none" /></Ico></button>
            </Row>
          </div>
        </div>
        <div className="border-b-2 border-black"><Head name="Cropping" diamond /></div>
        <div className="border-b-2 border-black"><Head name="Dynamic Zoom" on={false} resetDim /></div>
        <div className="border-b-2 border-black">
          <Head name="Composite" diamond />
          <div className="mb-[9px] grid h-[79px] grid-rows-2 pt-[3px]">
            <Row label="Composite Mode">
              <div className="relative flex flex-1 items-center">
                <select aria-label="Composite Mode" className="h-[30px] w-full appearance-none rounded-[3px] border-2 border-[#0c0c0d] bg-[#1f1f1f] pl-[14px] text-[18px] text-[#c4c4c6]"><option>Normal</option></select>
                <span className="pointer-events-none absolute right-[16px]"><Chev /></span>
              </div>
            </Row>
            <Slide label="Opacity" v="100.00" pos={100} w="w-[207px]" />
          </div>
        </div>
        <div className="grid h-[233px] grid-rows-5">
          <div className="border-b-2 border-black"><Head name="Speed Change" dim diamond /></div>
          <div className="border-b-2 border-black"><Head name="Stabilization" /></div>
          <div className="border-b-2 border-black"><Head name="Lens Correction" diamond /></div>
          <div className="border-b-2 border-black"><Head name="Retime and Scaling" /></div>
          <div className="border-b-2 border-black"><Head name="AI Super Scale" on={false} /></div>
        </div>
      </div>
    </section>
  );
}

/* ---------- viewers ---------- */
const g = "#8f9092";
const ToEnd = ({ c = g }: { c?: string }) => <Ico w={17} h={20} c={c}><path d="M0 0l13 10L0 20z" fill={c} stroke="none" /><path d="M16 0v20" /></Ico>;
const ToStart = () => <Ico w={17} h={20}><path d="M17 0L4 10l13 10z" fill={g} stroke="none" /><path d="M1 0v20" /></Ico>;

function Transport({ timeline }: { timeline?: boolean }) {
  return (
    <div className="flex flex-col border-y-2 border-black bg-[#25262b]">
      <div className="relative mx-[31px] mt-[15px] h-[26px]">
        {timeline
          ? <div className="h-[9px] border-y-2 border-black bg-[#47474b]" />
          : <div className="h-[9px] rounded-full border-2 border-black bg-[#17181a]" />}
        <svg className="absolute -top-[14px] -left-[8px]" width="16" height="26" viewBox="0 0 16 26" aria-hidden="true"><path d="M1 1h14v8l-6 6v10H7V15L1 9z" fill="#fc5143" stroke="#0c0c0d" /><path d="M6 4v6M10 4v6" stroke="#8d2f28" /></svg>
        {timeline && (
          <>
            <svg className="absolute top-0 -left-[7px]" width="14" height="25" viewBox="0 0 14 25" aria-hidden="true"><path d="M6 6h2v6l5 4v8H1v-8l5-4z" fill="#a4a4a4" stroke="#0c0c0d" /></svg>
            <svg className="absolute top-0 -right-[9px]" width="14" height="25" viewBox="0 0 14 25" aria-hidden="true"><path d="M6 0h2v12l5 4v8H1v-8l5-4z" fill="#a4a4a4" stroke="#0c0c0d" /></svg>
          </>
        )}
      </div>
      <div className="grid h-[47px] grid-cols-[491px_auto_1fr] items-center pb-[2px]">
        <div className="flex items-center justify-between pr-[87px] pl-[30px]">
          <button aria-label="View mode" className="flex items-center gap-[16px]">
            {timeline ? <Ico w={28} h={20} c="#8f9092"><rect x="4" y="4" width="20" height="12" /><g fill="#8f9092" stroke="none"><path d="M1 1h5v5H1zM22 1h5v5h-5zM1 14h5v5H1zM22 14h5v5h-5z" /></g></Ico> : <Film />}
            <Chev />
          </button>
          <div className="flex items-center gap-[13px]">
            <button aria-label="Previous" className="flex"><Ico w={10} h={14}><path d="M8 1L2 7l6 6" /></Ico></button>
            <button aria-label="Marker" className="size-[13px] rounded-full bg-[#8f9092]" />
            <button aria-label="Next" className="flex"><Ico w={10} h={14}><path d="M2 1l6 6-6 6" /></Ico></button>
          </div>
        </div>
        <div className="flex items-center">
          <button aria-label="First frame" className="flex w-[31px]"><Ico w={31} h={20}><g fill={g} stroke="none"><path d="M0 0h2v20H0zM16 0v20L3 10zM30 0v20L17 10z" /></g></Ico></button>
          <button aria-label="Play reverse" className="ml-[26px] flex"><Ico w={15} h={20}><path d="M15 0v20L0 10z" fill={g} stroke="none" /></Ico></button>
          <button aria-label="Stop" className="ml-[30px] size-[20px] bg-[#8f9092]" />
          <button aria-label="Play" className="ml-[29px] flex"><Ico w={15} h={20}><path d="M0 0v20l15-10z" fill={g} stroke="none" /></Ico></button>
          <button aria-label="Last frame" className="ml-[27px] flex"><Ico w={31} h={20}><g fill={g} stroke="none"><path d="M29 0h2v20h-2zM15 0v20l13-10zM1 0v20l13-10z" /></g></Ico></button>
          <button aria-label="Loop" className="ml-[27px] flex"><Ico w={32} h={24} s={3}><path d="M8 7a7.500 7.500 0 0 0 1 15h14a7.500 7.500 0 0 0 1-15M9 8h10M14 2l6 6-5 5" /></Ico></button>
        </div>
        <div className="flex items-center justify-end pr-[31px]">
          <button aria-label="Match frame" className="flex"><Ico w={28} h={20}><path d="M5 5V1h18v4M5 15v4h18v-4" /><path d="M0 5l6 5-6 5zM28 5l-6 5 6 5z" fill={g} stroke="none" /></Ico></button>
          <button aria-label="Mark in" className="ml-[34px] flex"><ToEnd /></button>
          <button aria-label="Mark out" className="ml-[38px] flex"><ToStart /></button>
        </div>
      </div>
    </div>
  );
}

const Ring = () => <span className="ml-[16px] size-[8px] self-center rounded-full border-2 border-[#0e0e10]" />;

function SourceViewer() {
  return (
    <section aria-label="Source viewer" className="flex min-w-0 flex-1 flex-col border-r-2 border-black">
      <SubBar>
        <div className="flex w-[147px] items-center gap-[14px] border-r border-black pl-[15px]">
          <button aria-label="Source" className="flex"><Picture /></button>
          <button aria-label="Strip" className="flex"><Ico w={30} h={24} c="#77787a"><path d="M2 1h26M2 23h26" strokeDasharray="3 3" strokeWidth="1.500" /><rect x="7" y="5" width="16" height="14" strokeWidth="1.500" /><path d="M1 5h3v14H1M29 5h-3v14h3" strokeWidth="1.500" /><path d="M10 17l4-6 3 3 2-2 2 5z" fill="#77787a" stroke="none" /></Ico></button>
          <button aria-label="Stacked" className="flex"><Ico w={26} h={22} c="#77787a" s={1.5}><path d="M1 1h24v12H1zM7 1v12M19 1v12M1 16h24v5H1zM13 16v5" /></Ico></button>
        </div>
        <button className="flex w-[94px] items-center justify-center gap-[22px] border-r border-black pl-[2px] text-[19px] font-medium text-white">Fit <Chev /></button>
        <Tc cls="w-[125px] border-r border-black">00:00:00:00</Tc>
        <Ring />
        <span className="flex-1" />
        <Tc cls="w-[134px] border-r border-black">00:00:00:00</Tc>
        <Cell w="w-[49px] pr-[4px]" last label="Source options"><Dots /></Cell>
      </SubBar>
      <div className="h-[865px] bg-[#1c1c1c]" />
      <Transport />
    </section>
  );
}

function TimelineViewer() {
  return (
    <section aria-label="Timeline viewer" className="flex min-w-0 flex-1 flex-col border-r-2 border-black">
      <SubBar>
        <button className="flex w-[98px] items-center justify-center gap-[16px] border-r border-black pl-[6px] text-[18px] font-medium text-white">88% <Chev /></button>
        <Tc cls="w-[124px] border-r border-black">00:00:02:09</Tc>
        <Ring />
        <span className="flex-1" />
        <button className="mr-[62px] flex items-center gap-[12px] text-[18px] font-medium text-[#f35648]">Timeline 1 <Chev /></button>
        <Tc cls="w-[138px] border-r border-black">01:00:00:00</Tc>
        <Cell w="w-[82px] gap-[13px] pr-[2px]" label="Crop view"><Ico w={29} h={22} c="#77787a"><rect x="1" y="1" width="27" height="20" fill="#3a3b40" /><path d="M6 9V6h5M23 9V6h-5M6 13v3h5M23 13v3h-5" /></Ico><Chev /></Cell>
        <Cell w="w-[72px] gap-[10px] pr-[2px]" label="Quality">
          <svg width="32" height="24" viewBox="0 0 32 24" aria-hidden="true"><rect x="1" y="1" width="26" height="19" fill="none" stroke="#eee" strokeWidth="2" /><path d="M5 5v12" stroke="#eee" strokeWidth="2" strokeDasharray="3 2" /><rect x="9" y="9" width="22" height="15" rx="2" fill="#eee" /><text x="20" y="21" fontSize="12" fontWeight="700" textAnchor="middle" fill="#25262b" fontFamily='"Open Sans", sans-serif'>HQ</text></svg>
          <Chev />
        </Cell>
        <Cell w="w-[75px] gap-[12px] pr-[2px]" label="Overlays"><Ico w={28} h={24} c="#77787a"><path d="M4 0v5M24 0v5M4 19v5M24 19v5M0 4h4M24 4h4M0 20h4M24 20h4" strokeWidth="1.500" /><rect x="5" y="5" width="18" height="14" fill="#3a3b40" stroke="none" /><path d="M6 18l5-8 4 4 3-5 4 9z" fill="#8f9092" stroke="none" /></Ico><Chev /></Cell>
        <Cell w="w-[56px]" label="Color bypass">
          <svg width="30" height="26" viewBox="0 0 30 26" fill="none" strokeWidth="3" aria-hidden="true"><path d="M9 5a10 10 0 0 1 12-2" stroke="#ff6a55" /><path d="M21 3a10.500 10.500 0 0 1 6 9" stroke="#e04b6a" /><path d="M27 12a10.500 10.500 0 0 1-4 9" stroke="#7fa8e8" /><path d="M23 21a9 9 0 0 1-6 3" stroke="#28c840" /><g fill="#ffb03a"><path d="M5 6l1 3 3 1-3 1-1 3-1-3-3-1 3-1zM14 10l1 3 3 1-3 1-1 3-1-3-3-1 3-1zM8 16l1 4 4 1-4 1-1 4-1-4-4-1 4-1z" /></g></svg>
        </Cell>
        <Cell w="w-[47px]" label="Single viewer"><Ico w={26} h={21} c="#c8c8ca"><rect x="1" y="1" width="24" height="19" /></Ico></Cell>
        <Cell w="w-[50px] pr-[4px]" last label="Viewer options"><Dots /></Cell>
      </SubBar>
      <div className="relative flex h-[865px] items-center justify-center bg-[#1c1c1c]">
        <LandMap cls="aspect-video w-[calc(100%-6px)]" title="Land cover map of North America" />
        <span className="absolute inset-y-0 left-0 flex w-[46px] flex-col items-center justify-between bg-black/40 py-[15px] pl-[2px]">
          <ToEnd c="#b0b0b0" /><ToEnd c="#b0b0b0" />
        </span>
      </div>
      <Transport timeline />
    </section>
  );
}

/* ---------- edit toolbar ---------- */
const Tool = ({ label, children, w = "w-[60px]" }: Kids & { label: string; w?: string }) => (
  <button aria-label={label} className={`flex shrink-0 items-center justify-center ${w}`}>{children}</button>
);
const Sep = () => <span className="mx-[7px] h-[45px] w-[2px] bg-[#46474a]" />;
const Lens = ({ kind, c }: { kind: number; c: string }) => (
  <Ico w={42} h={28} c={c}>
    {kind === 0 && <><rect x="1" y="1" width="34" height="18" fill="#303136" /><path d="M4 14h14M4 5h28" strokeDasharray="3 2" opacity=".6" /></>}
    {kind === 1 && <path d="M2 1v8M6 1v5M10 1v8M14 1v5M24 1v5M28 1v5M32 1v5M1 18h14" strokeWidth="1.500" />}
    {kind === 2 && <><path d="M2 0v9M6 0v6M10 0v9M14 0v6M18 0v9M22 0v6M26 0v6M30 0v6M34 0v6" strokeWidth="1.500" /><path d="M1 19h22" stroke="#77787a" /></>}
    {kind === 1 && <path d="M18 1v18" />}
    <circle cx="30" cy="14" r="7" fill="#25262b" /><path d="M34 20l5 6" strokeWidth="3" />
  </Ico>
);

function EditToolbar() {
  return (
    <div className="flex h-[76px] shrink-0 items-center justify-between border-b-2 border-black bg-[#25262b] pl-[16px]">
      <div className="flex">
        <Tool label="Timeline view"><Ico w={36} h={26}><path d="M1 2h30v7H1zM11 2v7M21 2v7" /><path d="M0 14h22M0 22h22" strokeWidth="4" opacity=".5" /><path d="M23 18l4 6 8-12" strokeWidth="3" /></Ico></Tool>
        <Tool label="Stacked timelines"><Ico w={40} h={24}><path d="M12 1L2 12l10 11M18 1L8 12l10 11" opacity=".6" /><path d="M27 1l11 11-11 11-11-11z" fill="#55565a" /></Ico></Tool>
        <Tool label="Voiceover"><Ico w={28} h={28}><rect x="5" y="1" width="8" height="15" rx="4" fill={g} /><path d="M1 11c0 12 16 12 16 0M9 20v7M4 27h10" /><path d="M19 3v8M23 1v9M27 4v4" strokeWidth="1.500" /></Ico></Tool>
      </div>
      <div className="mr-[6px] flex items-center">
        <Tool label="Selection"><Ico w={18} h={28}><path d="M1 1l16 15-6 1 3 9-4 1-4-9-5 5z" fill="#fc5143" stroke="none" /></Ico></Tool>
        <Tool label="Trim"><Ico w={42} h={30} c="#66676a"><path d="M14 6H1v19h13M28 6h13v19H28" /><g stroke={g}><path d="M11 11l-5 5 5 5M31 11l5 5-5 5M21 10v10" /><rect x="16" y="1" width="10" height="28" rx="2" /></g></Ico></Tool>
        <Tool label="Blade"><Ico w={34} h={22}><path d="M3 1h28M3 21h28" strokeWidth="3" /><path d="M0 5h34v12H0z" fill={g} stroke="none" /><path d="M4 8v6M9 7v2M13 7v3M18 7v2M22 7v3M27 7v2M9 15v-2M13 15v-3M18 15v-2M22 15v-3M27 15v-2M30 8v6" stroke="#25262b" strokeWidth="3" /></Ico></Tool>
        <Tool label="Dynamic trim"><Ico w={38} h={30} c="#66676a"><path d="M6 7H4L1 10v13l3 3h2M32 7h2l3 3v13l-3 3h-2" /><g stroke={g}><path d="M13 12l-5 5 5 5M25 12l5 5-5 5M19 4v26" /><path d="M15 1h8l-4 5z" fill={g} strokeWidth="1" /></g></Ico></Tool>
        <Sep />
        <Tool label="Insert clip"><Ico w={42} h={30} c="#66676a"><rect x="1" y="10" width="7" height="16" /><rect x="34" y="10" width="7" height="16" /><g stroke={g}><rect x="12" y="2" width="18" height="16" fill="#36373b" /><path d="M16 23l5 5 5-5" /></g></Ico></Tool>
        <Tool label="Overwrite clip"><Ico w={36} h={32} c="#66676a"><path d="M24 14h8v16H13v-6" /><g stroke={g}><rect x="1" y="6" width="20" height="16" fill="#36373b" /><path d="M24 2h4q3 0 3 8M27 6l4 4 4-4" /></g></Ico></Tool>
        <Tool label="Replace clip"><Ico w={42} h={32} c="#66676a"><path d="M34 8h7v16H18M26 8h-4v16" /><g stroke={g}><path d="M5 24H1V8h19v16h-4M10 24V12M5 17l5-5 5 5M10 24c0 9 10 9 10 2M22 8c0-9 10-9 10-2v13M27 14l5 5 5-5" /></g></Ico></Tool>
        <Sep />
        <Tool label="Snapping"><Ico w={28} h={28} c="#fff" s={4}><path d="M10 7l-5 5c-8 9 4 19 13 11l3-3" /><path d="M13 4l2-2M23 17l3-3" /></Ico></Tool>
        <Tool label="Linked selection"><LinkGlyph size={26} /></Tool>
        <Tool label="Position lock"><Ico w={24} h={28}><path d="M5 11V7a7 6 0 0 1 14 0v4" /><path d="M0 11h24v16H0z" fill={g} stroke="none" /><path d="M5 19h14M8 15l-4 4 4 4M16 15l4 4-4 4" stroke="#25262b" /></Ico></Tool>
        <Sep />
        <button aria-label="Flag" className="flex w-[66px] items-center gap-[12px] pl-[13px]"><Ico w={17} h={20}><path d="M0 0h17v20l-8.500-7L0 20z" fill="#1591ff" stroke="none" /></Ico><Chev /></button>
        <button aria-label="Marker" className="flex w-[66px] items-center gap-[13px] pl-[12px]"><Ico w={17} h={20}><path d="M2 0h13l2 2v11l-8.500 7L0 13V2z" fill="#1591ff" stroke="none" /></Ico><Chev /></button>
        <Sep />
        <Tool label="Full extent zoom"><Lens kind={0} c="#77787a" /></Tool>
        <Tool label="Detail zoom"><Lens kind={1} c="#66676a" /></Tool>
        <Tool label="Custom zoom"><Lens kind={2} c="#e6e6e6" /></Tool>
        <Tool w="w-[44px]" label="Zoom out"><Ico w={20} h={20}><circle cx="10" cy="10" r="10" fill="#39393d" stroke="none" /><path d="M6 10h8" /></Ico></Tool>
        <Range label="Timeline zoom" value={62} w="w-[112px]" />
        <Tool w="w-[56px]" label="Zoom in"><Ico w={20} h={20}><circle cx="10" cy="10" r="10" fill="#39393d" stroke="none" /><path d="M5 10h10M10 5v10" /></Ico></Tool>
      </div>
      <div className="flex items-center pr-[33px]">
        <button aria-label="Mute" className="flex"><Ico w={29} h={22} c="#fff"><path d="M0 6h6l8-6v22l-8-6H0z" fill="#fff" stroke="none" /><path d="M18 6q4 5 0 10M22 3q6 8 0 16" /></Ico></button>
        <input type="range" aria-label="Volume" defaultValue={100} className="ml-[6px] h-[5px] w-[124px] appearance-none rounded-full bg-[#2c9a10] [&::-webkit-slider-thumb]:size-[14px] [&::-webkit-slider-thumb]:appearance-none [&::-webkit-slider-thumb]:rounded-full [&::-webkit-slider-thumb]:bg-[#a6a6a6]" />
        <button className="ml-[12px] h-[29px] w-[58px] rounded-[7px] border-2 border-[#4c4d51] text-[17px] leading-[20px] text-[#c0c0c2]">DIM</button>
        <span className="ml-[15px] flex h-[30px] w-[20px] border-2 border-black bg-[#2c2d31]"><span className="mx-auto w-[2px] bg-black" /></span>
      </div>
    </div>
  );
}

/* ---------- timeline ---------- */
const SPAN = 288.6;
const MARKS = ["01:00:00:00", "01:00:08:00", "01:00:16:00", "01:00:24:00", "01:00:32:00", "01:00:40:00", "01:00:48:00", "01:00:56:00", "01:01:04:00", "01:01:12:00"];

function ticks(fine: boolean) {
  let d = "";
  for (let i = 1; i < 468; i++) {
    if (i % 48 === 0) continue;
    const x = Math.round((i * SPAN) / 48) + 0.5;
    if (i % 24 === 0) { if (!fine) d += `M${x} 0v21`; }
    else if (fine) d += `M${x} 0v${i % 2 ? 8 : 14}`;
  }
  return d;
}

const Lock = () => <Ico w={18} h={20}><path d="M3 9V5a5 4 0 0 1 12 0" stroke="#55565a" /><path d="M0 8h18v12H0z" fill="#55565a" stroke="none" /></Ico>;
const AutoSel = () => <Ico w={27} h={20} c="#f0f0f0"><rect x="1" y="1" width="25" height="18" rx="2" /><path d="M11 6l-4 4 4 4M16 6l4 4-4 4" /></Ico>;

function TrackHead({ id, name, stripe, h, boxed, audio, top }: { id: string; name: string; stripe: string; h: string; boxed?: boolean; audio?: boolean; top: string }) {
  return (
    <div className={`flex shrink-0 border-b-2 border-black ${h}`}>
      <span className={`w-[6px] border-r border-black ${stripe}`} />
      <span className="w-[24px] border-r-2 border-black" />
      <div className="flex flex-1 flex-col">
        <div className={`flex shrink-0 border-b-2 border-black ${top}`}>
          <div className="flex w-[67px] items-center justify-center border-r-2 border-black pl-[5px]">
            <button className={`flex h-[30px] w-[49px] items-center justify-center text-[18px] text-white ${boxed ? "rounded-[2px] border-2 border-[#e04f43] font-medium" : "font-bold"}`}>{id}</button>
          </div>
          <span className="flex flex-1 items-center pl-[12px] text-[18px] font-medium text-[#ececec]">{name}</span>
          {audio && <span className="flex items-center pr-[12px] text-[17px] text-[#85868a]">2.0</span>}
        </div>
        <div className={`flex items-center pl-[89px] ${audio ? "pt-[10px]" : "pt-[8px]"}`}>
          <button aria-label={`Lock ${name}`} className="flex"><Lock /></button>
          <button aria-label={`Auto select ${name}`} className="ml-[19px] flex"><AutoSel /></button>
          {audio ? (
            <>
              <button aria-label={`Solo ${name}`} className="ml-[14px] h-[27px] w-[27px] rounded-[6px] bg-[#404145] text-[16px] leading-[27px] font-medium text-[#8f9092]">S</button>
              <button aria-label={`Mute ${name}`} className="ml-[17px] h-[27px] w-[27px] rounded-[6px] bg-[#404145] text-[16px] leading-[27px] font-medium text-[#8f9092]">M</button>
            </>
          ) : <button aria-label={`Enable ${name}`} className="ml-[14px] flex"><Film w={27} h={20} c="#b8b8ba" fill="#55565a" /></button>}
        </div>
        {!audio && <span className="mt-[16px] pl-[21px] text-[18px] leading-[24px] text-[#8f9092]">1 Clip</span>}
      </div>
    </div>
  );
}

function Timeline() {
  return (
    <section aria-label="Timeline" className="relative flex min-h-0 flex-1">
      <div className="flex w-[348px] shrink-0 flex-col border-r-2 border-black bg-[#25262b]">
        <div className="flex h-[61px] shrink-0 items-center justify-center border-b-2 border-black pt-[3px] pl-[2px] text-[31px] font-semibold text-[#dedee0]">01:00:00:00</div>
        <div className="h-[261px] shrink-0 border-b-2 border-black" />
        <TrackHead id="V1" name="Video 1" stripe="bg-[#3a83b7]" h="h-[168px]" top="h-[41px]" boxed />
        <div className="h-[6px] shrink-0 border-b-2 border-black bg-[#47474b]" />
        <TrackHead id="A1" name="Audio 1" stripe="bg-[#588a6c]" h="h-[106px]" top="h-[39px]" boxed audio />
        <TrackHead id="A2" name="Audio 2" stripe="bg-[#588a6c]" h="h-[106px]" top="h-[41px]" audio />
      </div>
      <div className="relative flex min-w-0 flex-1 flex-col overflow-hidden bg-[#2d2d35]">
        <div className="relative h-[61px] shrink-0 border-b-2 border-[#222226]">
          <svg className="absolute top-0 left-[2px]" width="2812" height="24" viewBox="0 0 2812 24" aria-hidden="true">
            <path d={ticks(true)} stroke="#5c5d63" /><path d={ticks(false)} stroke="#7f8084" />
          </svg>
          {MARKS.map((m, i) => (
            <span key={m} className="absolute top-0 h-[38px] border-l border-[#8a8b8f] pt-[17px] pl-[8px] text-[16px] leading-[24px] text-[#a2a3a5]" style={{ left: Math.round(1 + i * SPAN) }}>{m}</span>
          ))}
        </div>
        <div className="relative flex flex-1 flex-col">
          <div className="h-[261px] shrink-0 border-b-2 border-[#35353a]" />
          <div className="relative h-[166px] shrink-0 border-b-2 border-black">
            <div className="absolute top-[3px] left-[2px] flex h-[164px] w-[83px] flex-col rounded-[5px] border-2 border-[#3a83b7] bg-[#3a83b7]">
              <LandMap x={535} w={434} cls="h-[127px] w-[77px] border-2 border-black" title="Clip thumbnail" />
              <span className="pl-[4px] text-[17px] leading-[34px] text-white">mappi-...</span>
            </div>
          </div>
          <div className="h-[8px] shrink-0 border-b-2 border-black bg-[#47474b]" />
          <div className="h-[106px] shrink-0 border-b-2 border-[#35353a]" />
          <div className="h-[106px] shrink-0 border-b-2 border-[#35353a]" />
          <span className="flex-1" />
          {MARKS.slice(1).map((m, i) => (
            <span key={m} className="absolute inset-y-0 w-px bg-[#4a4a4f]" style={{ left: Math.round(1 + (i + 1) * SPAN) }} />
          ))}
        </div>
        <div className="flex h-[18px] shrink-0 items-center bg-[#343438] pl-[2px]">
          <div className="h-[14px] w-[1408px] rounded-full border-2 border-black bg-[#66686c]" />
        </div>
        <span className="absolute top-0 right-[14px] bottom-0 w-[7px] bg-linear-to-r from-transparent via-black/50 to-transparent" />
        <span className="absolute top-0 bottom-[18px] left-0 w-[3px] bg-[#fc5143]" />
      </div>
      <svg className="absolute top-0 left-[337px]" width="25" height="22" viewBox="0 0 25 22" aria-hidden="true"><path d="M0 0h25v9l-9 9-2 4h-3l-2-4-9-9z" fill="#fc5143" stroke="#151517" /></svg>
    </section>
  );
}

/* ---------- page bar ---------- */
function PageBar() {
  const pages: [string, React.ReactNode][] = [
    ["Media", <Ico w={28} h={24}><path d="M4 1h20M3 4h22" /><rect x="2" y="7" width="24" height="16" /><circle cx="8" cy="12" r="1.500" /><path d="M5 21l6-5 4 4 4-6 4 7" /></Ico>],
    ["Cut", <Ico w={36} h={24}><path d="M12 3H34l-3 18H20M16 3h-4l-2 18h4M24 0l-6 24" /><path d="M4 6h7M1 11h9M4 16h5" /><path d="M30 7v2M29 14v2" /></Ico>],
    ["Edit", <svg width="34" height="28" viewBox="0 0 34 28" aria-hidden="true"><g fill="#3d9ae8"><rect x="0" y="6" width="14" height="5" rx="1" /><rect x="20" y="6" width="11" height="5" rx="1" /><rect x="6" y="12" width="9" height="5" rx="1" /><rect x="19" y="12" width="10" height="5" rx="1" /></g><g fill="#35b34a"><rect x="0" y="18" width="14" height="5" rx="1" /><rect x="19" y="18" width="15" height="5" rx="1" /></g><path d="M14 0h6l-2 6v22h-2V6z" fill="#fc5143" /></svg>],
    ["Fusion", <Ico w={32} h={28}><path d="M18 24L27 5l3 2-9 19z" fill="#8f9092" /><path d="M22 0v5M19.500 2.500h5M8 4v7M4.500 7.500h7M15 9v6M12 12h6M4 14c-2 5 0 8 4 10" strokeWidth="1.500" /></Ico>],
    ["Color", <Ico w={26} h={26}><g fill="#8f9092" stroke="none">{[[9, 3], [17, 4], [4, 9], [13, 12], [22, 8], [3, 16], [23, 15], [8, 22], [16, 23], [20, 20]].map(([x, y]) => <circle key={`${x}.${y}`} cx={x} cy={y} r="2.700" />)}</g></Ico>],
    ["Fairlight", <Note />],
    ["Deliver", <Ico w={26} h={26}><path d="M24 2c-8 0-12 4-15 10l5 5c6-3 10-7 10-15zM9 12l-6 3 4 1M14 17l-3 7-1-5M4 19l-2 6 6-2" /><circle cx="17" cy="9" r="2" /></Ico>],
  ];
  return (
    <footer className="grid h-[70px] shrink-0 grid-cols-[1fr_auto_1fr] border-t-2 border-black bg-[#191a1c]">
      <div className="flex items-center gap-[12px] pt-[5px] pl-[61px] text-[21px] text-white">
        <Ico w={29} h={27}><g fill="#fff" stroke="none"><path d="M14.500 14c-9-6-7-14 0-14s9 8 0 14zM13.500 15c1 11-5 14-9 11s-5-10 9-11zM15.500 15c-1 11 5 14 9 11s5-10-9-11z" /></g></Ico>
        <span className="font-['Lato'] font-bold">DaVinci Resolve 20</span>
      </div>
      <nav aria-label="Pages" className="flex pr-[6px]">
        {pages.map(([name, icon]) => {
          const on = name === "Edit";
          return (
            <button key={name} className={`mx-[1px] flex w-[178px] flex-col items-center pt-[8px] text-[18px] ${on ? "border-b-4 border-[#fc5143] bg-black font-medium text-white" : "text-[#8f9092]"}`}>
              <span className="flex h-[28px] items-center">{icon}</span>
              <span className="mt-[4px] leading-[24px]">{name}</span>
            </button>
          );
        })}
      </nav>
      <div className="flex items-center justify-end gap-[52px] pt-[2px] pr-[38px]">
        <button aria-label="Project manager" className="flex"><Ico w={22} h={20}><path d="M11 0L0 10h3v10h6v-7h4v7h6V10h3z" fill={g} stroke="none" /></Ico></button>
        <button aria-label="Project settings" className="flex"><Ico w={24} h={24} s={2}><circle cx="12" cy="12" r="7" /><circle cx="12" cy="12" r="2.500" /><path d="M12 1v4M12 19v4M1 12h4M19 12h4M4.200 4.200L7 7M17 17l2.800 2.800M19.800 4.200L17 7M7 17l-2.800 2.800" strokeWidth="3" /></Ico></button>
      </div>
    </footer>
  );
}

export default function App() {
  return (
    <div className="flex h-screen flex-col overflow-hidden border-r-2 border-b-2 border-[#45464a] bg-[#191a1c] font-['Open_Sans','Noto_Sans',sans-serif]">
      <TitleBar />
      <main className="flex min-h-0 flex-1">
        <MediaPool />
        <div className="flex min-w-0 flex-1 flex-col">
          <div className="flex shrink-0">
            <SourceViewer />
            <TimelineViewer />
            <Inspector />
          </div>
          <EditToolbar />
          <Timeline />
        </div>
      </main>
      <PageBar />
    </div>
  );
}
